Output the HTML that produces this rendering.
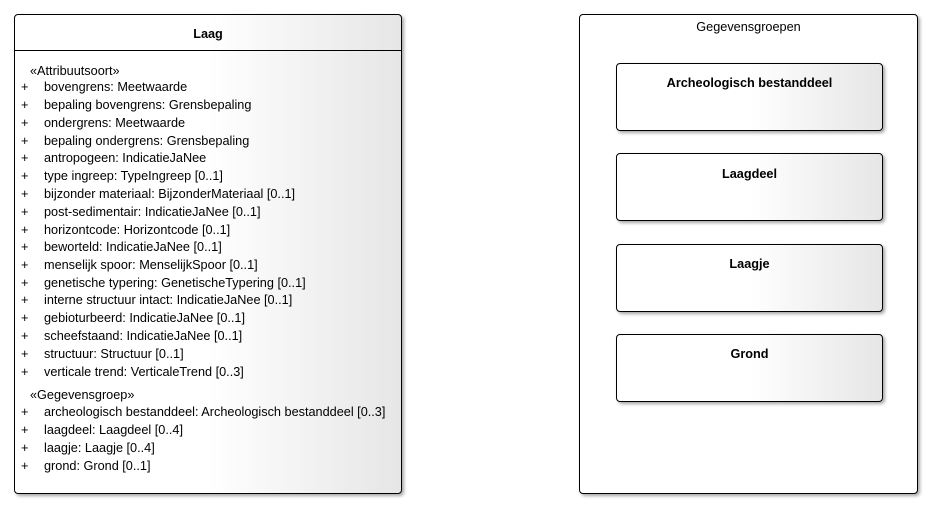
<!DOCTYPE html>
<html><head><meta charset="utf-8"><style>
body{margin:0;width:932px;height:507px;background:#fff;position:relative;overflow:hidden;font-family:"Liberation Sans",sans-serif;font-size:12.7px;color:#000}
.box{position:absolute;border:1px solid #000;border-radius:4px;box-sizing:border-box;box-shadow:2px 2px 3px rgba(0,0,0,.35)}
.g{background:linear-gradient(to right,#fff 50%,#e6e6e6)}
.t{position:absolute;white-space:nowrap;line-height:14px}
.b{font-weight:bold}
</style></head><body>
<div class="box g" style="left:14px;top:14px;width:388px;height:480px"></div>
<div style="position:absolute;left:15px;top:50px;width:386px;height:1px;background:#000"></div>
<div class="t b" style="left:14px;width:388px;text-align:center;top:27px">Laag</div>
<div class="t" style="left:30px;top:64px">«Attribuutsoort»</div>
<div class="box" style="left:579px;top:14px;width:339px;height:480px;background:#fff"></div>
<div class="t" style="left:579px;width:339px;text-align:center;top:20px">Gegevensgroepen</div>
<div class="box g" style="left:616px;top:63px;width:267px;height:68px"></div>
<div class="t b" style="left:616px;width:267px;text-align:center;top:76px">Archeologisch bestanddeel</div>
<div class="box g" style="left:616px;top:153px;width:267px;height:68px"></div>
<div class="t b" style="left:616px;width:267px;text-align:center;top:167px">Laagdeel</div>
<div class="box g" style="left:616px;top:244px;width:267px;height:68px"></div>
<div class="t b" style="left:616px;width:267px;text-align:center;top:257px">Laagje</div>
<div class="box g" style="left:616px;top:334px;width:267px;height:68px"></div>
<div class="t b" style="left:616px;width:267px;text-align:center;top:347px">Grond</div>
<div class="t" style="left:30px;top:388px">«Gegevensgroep»</div>

<div class="t" style="left:21px;top:80px">+</div><div class="t" style="left:44px;top:80px">bovengrens: Meetwaarde</div>
<div class="t" style="left:21px;top:98px">+</div><div class="t" style="left:44px;top:98px">bepaling bovengrens: Grensbepaling</div>
<div class="t" style="left:21px;top:116px">+</div><div class="t" style="left:44px;top:116px">ondergrens: Meetwaarde</div>
<div class="t" style="left:21px;top:134px">+</div><div class="t" style="left:44px;top:134px">bepaling ondergrens: Grensbepaling</div>
<div class="t" style="left:21px;top:151px">+</div><div class="t" style="left:44px;top:151px">antropogeen: IndicatieJaNee</div>
<div class="t" style="left:21px;top:169px">+</div><div class="t" style="left:44px;top:169px">type ingreep: TypeIngreep [0..1]</div>
<div class="t" style="left:21px;top:187px">+</div><div class="t" style="left:44px;top:187px">bijzonder materiaal: BijzonderMateriaal [0..1]</div>
<div class="t" style="left:21px;top:205px">+</div><div class="t" style="left:44px;top:205px">post-sedimentair: IndicatieJaNee [0..1]</div>
<div class="t" style="left:21px;top:223px">+</div><div class="t" style="left:44px;top:223px">horizontcode: Horizontcode [0..1]</div>
<div class="t" style="left:21px;top:240px">+</div><div class="t" style="left:44px;top:240px">beworteld: IndicatieJaNee [0..1]</div>
<div class="t" style="left:21px;top:258px">+</div><div class="t" style="left:44px;top:258px">menselijk spoor: MenselijkSpoor [0..1]</div>
<div class="t" style="left:21px;top:276px">+</div><div class="t" style="left:44px;top:276px">genetische typering: GenetischeTypering [0..1]</div>
<div class="t" style="left:21px;top:293px">+</div><div class="t" style="left:44px;top:293px">interne structuur intact: IndicatieJaNee [0..1]</div>
<div class="t" style="left:21px;top:311px">+</div><div class="t" style="left:44px;top:311px">gebioturbeerd: IndicatieJaNee [0..1]</div>
<div class="t" style="left:21px;top:329px">+</div><div class="t" style="left:44px;top:329px">scheefstaand: IndicatieJaNee [0..1]</div>
<div class="t" style="left:21px;top:347px">+</div><div class="t" style="left:44px;top:347px">structuur: Structuur [0..1]</div>
<div class="t" style="left:21px;top:365px">+</div><div class="t" style="left:44px;top:365px">verticale trend: VerticaleTrend [0..3]</div>
<div class="t" style="left:21px;top:405px">+</div><div class="t" style="left:44px;top:405px">archeologisch bestanddeel: Archeologisch bestanddeel [0..3]</div>
<div class="t" style="left:21px;top:423px">+</div><div class="t" style="left:44px;top:423px">laagdeel: Laagdeel [0..4]</div>
<div class="t" style="left:21px;top:441px">+</div><div class="t" style="left:44px;top:441px">laagje: Laagje [0..4]</div>
<div class="t" style="left:21px;top:459px">+</div><div class="t" style="left:44px;top:459px">grond: Grond [0..1]</div>
</body></html>
